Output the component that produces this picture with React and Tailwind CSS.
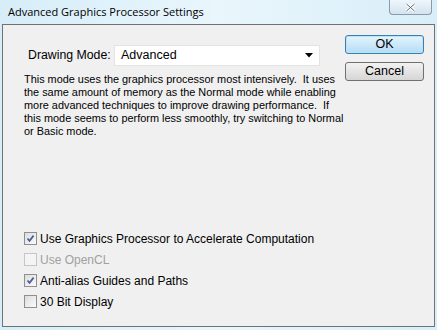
import React from 'react'

function Check({ checked, disabled, label }) {
  return (
    <label className={`flex items-center gap-[3px] h-[21px] whitespace-nowrap ${disabled ? 'text-[#a0a0a0]' : 'text-black'}`}>
      <span
        className={`w-[13px] h-[13px] flex items-center justify-center border ${
          disabled ? 'border-[#c6c6c6] bg-[#f4f4f4]' : 'border-[#8e8f8f] bg-gradient-to-br from-[#dcdcdc] to-[#fbfbfb]'
        }`}
      >
        {checked && (
          <svg width="9" height="9" viewBox="0 0 9 9">
            <path d="M1.5 4.5 L3.5 6.8 L7.6 1.6" fill="none" stroke="#4a5f97" strokeWidth="1.7" />
          </svg>
        )}
      </span>
      <span className="text-[12px] leading-none">{label}</span>
    </label>
  )
}

export default function App() {
  return (
    <div
      className="w-[437px] h-[330px] flex flex-col bg-gradient-to-r from-[#d6edf8] via-[#e9f6fc] to-[#d8eef8]"
      style={{ fontFamily: '"Liberation Sans", Arial, sans-serif' }}
    >
      {/* Title bar */}
      <div className="h-[24px] flex items-start justify-between pl-[8px] pr-[5px] shrink-0">
        <span
          className="text-[11px] text-black mt-[4px] whitespace-nowrap"
          style={{ fontFamily: '"Open Sans", "Noto Sans", sans-serif' }}
        >
          Advanced Graphics Processor Settings
        </span>
        <div className="w-[43px] h-[15px] border border-t-0 border-[#8a9aa8] rounded-b-[4px] bg-gradient-to-b from-[#eef6fb] to-[#d4e3ee] flex items-center justify-center">
          <svg width="11" height="9" viewBox="0 0 11 9">
            <path d="M1.5 1 L9.5 8 M9.5 1 L1.5 8" stroke="#ffffff" strokeWidth="3" />
            <path d="M1.5 1 L9.5 8 M9.5 1 L1.5 8" stroke="#586775" strokeWidth="1" />
          </svg>
        </div>
      </div>

      {/* Dialog body */}
      <div className="flex-1 ml-[2px] mr-[2px] mb-[3px] border border-[#6e7378] bg-[#f0f0f0] flex">
        <div className="flex-1 flex flex-col pl-[21px]">
          <div className="flex items-center mt-[20px] pl-[4px]">
            <span className="text-[12.3px] text-black w-[86px] whitespace-nowrap">Drawing Mode:</span>
            <div className="w-[206px] h-[21px] bg-white border border-[#e3e3e3] flex items-center justify-between pl-[6px] pr-[6px]">
              <span className="text-[12.5px] text-black">Advanced</span>
              <svg width="8" height="5" viewBox="0 0 8 5">
                <path d="M0 0 H8 L4 4.5 Z" fill="#000" />
              </svg>
            </div>
          </div>
          <p className="mt-[7px] text-[10.9px] leading-[13px] text-black whitespace-nowrap">
            This mode uses the graphics processor most intensively.&nbsp; It uses
            <br />
            the same amount of memory as the Normal mode while enabling
            <br />
            more advanced techniques to improve drawing performance.&nbsp; If
            <br />
            this mode seems to perform less smoothly, try switching to Normal
            <br />
            or Basic mode.
          </p>
          <div className="mt-auto mb-[14px] flex flex-col">
            <Check checked label="Use Graphics Processor to Accelerate Computation" />
            <Check disabled label="Use OpenCL" />
            <Check checked label="Anti-alias Guides and Paths" />
            <Check label="30 Bit Display" />
          </div>
        </div>

        <div className="w-[89px] flex flex-col pt-[10px] gap-[8px] shrink-0">
          <button className="w-[79px] h-[19px] rounded-[3px] border border-[#3c7fb1] bg-gradient-to-b from-[#e5f4fc] to-[#b3dcf5] text-[12.5px] leading-none text-black shadow-[inset_0_0_0_1px_#b8e4fb]">
            OK
          </button>
          <button className="w-[79px] h-[19px] rounded-[3px] border border-[#707070] bg-gradient-to-b from-[#f2f2f2] to-[#d6d6d6] text-[12.5px] leading-none text-black">
            Cancel
          </button>
        </div>
      </div>
    </div>
  )
}
